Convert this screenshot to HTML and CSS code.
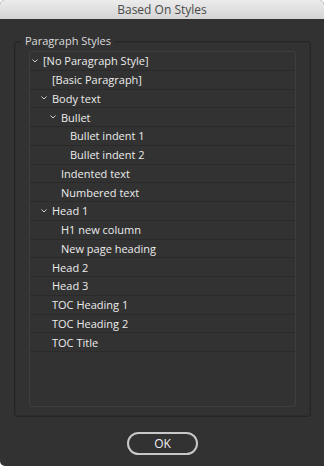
FILE: index.html
```html
<!DOCTYPE html>
<html lang="en">
<head>
    <meta charset="UTF-8">
    <title>Based On Styles</title>
    <link rel="stylesheet" href="styles.css">
</head>
<body>
    <div class="dialog">
        <div class="titlebar">Based On Styles</div>
        <div class="content">
            <div class="group">
                <span class="group-label">Paragraph Styles</span>
                <ul class="style-list">
                    <li class="row level-0"><svg class="chevron" viewBox="0 0 6 4"><polyline points="0.5,0.5 3,3 5.5,0.5"/></svg>[No Paragraph Style]</li>
                    <li class="row level-1 leaf">[Basic Paragraph]</li>
                    <li class="row level-1"><svg class="chevron" viewBox="0 0 6 4"><polyline points="0.5,0.5 3,3 5.5,0.5"/></svg>Body text</li>
                    <li class="row level-2"><svg class="chevron" viewBox="0 0 6 4"><polyline points="0.5,0.5 3,3 5.5,0.5"/></svg>Bullet</li>
                    <li class="row level-3 leaf">Bullet indent 1</li>
                    <li class="row level-3 leaf">Bullet indent 2</li>
                    <li class="row level-2 leaf">Indented text</li>
                    <li class="row level-2 leaf">Numbered text</li>
                    <li class="row level-1"><svg class="chevron" viewBox="0 0 6 4"><polyline points="0.5,0.5 3,3 5.5,0.5"/></svg>Head 1</li>
                    <li class="row level-2 leaf">H1 new column</li>
                    <li class="row level-2 leaf">New page heading</li>
                    <li class="row level-1 leaf">Head 2</li>
                    <li class="row level-1 leaf">Head 3</li>
                    <li class="row level-1 leaf">TOC Heading 1</li>
                    <li class="row level-1 leaf">TOC Heading 2</li>
                    <li class="row level-1 leaf">TOC Title</li>
                </ul>
            </div>
            <div class="actions">
                <button class="ok-button" type="button">OK</button>
            </div>
        </div>
    </div>
</body>
</html>
```

FILE: styles.css
```css
*, ::before, ::after {
    margin: 0;
    padding: 0;
    box-sizing: border-box;
}

body {
    background-color: #fff;
    font-family: "Open Sans", "Liberation Sans", sans-serif;
    font-size: 11px;
}

.dialog {
    width: 324px;
    height: 466px;
    background-color: #323232;
    border-radius: 5px 5px 0 5px;
    overflow: hidden;
    display: flex;
    flex-direction: column;
}

.titlebar {
    height: 19px;
    background: linear-gradient(#ececec, #d4d4d4);
    color: #4a4a4a;
    font-size: 12px;
    line-height: 19px;
    text-align: center;
}

.content {
    padding: 22px 13px 0 14px;
}

.group {
    position: relative;
    height: 376px;
    border: 1px solid #252525;
    border-radius: 3px;
    box-shadow: inset 0 0 0 1px #2d2d2d;
    padding: 9px 14px;
}

.group-label {
    position: absolute;
    top: -8px;
    left: 6px;
    padding: 0 4px;
    background-color: #323232;
    color: #dcdcdc;
    line-height: 14px;
}

.style-list {
    list-style: none;
    height: 356px;
    border: 1px solid #3e3e3e;
    border-radius: 3px;
    overflow: hidden;
}

.row {
    display: flex;
    align-items: center;
    height: 18.75px;
    border-bottom: 1px solid #2a2a2a;
    color: #ececec;
    white-space: nowrap;
}

.chevron {
    width: 6px;
    height: 4px;
    margin-right: 5px;
    fill: none;
    stroke: #d0d0d0;
    stroke-width: 1;
}

.level-0 { padding-left: 2px; }
.level-1 { padding-left: 11px; }
.level-2 { padding-left: 20px; }
.level-3 { padding-left: 29px; }
.leaf.level-1 { padding-left: 22px; }
.leaf.level-2 { padding-left: 31px; }
.leaf.level-3 { padding-left: 40px; }

.actions {
    display: flex;
    justify-content: center;
    padding-top: 15px;
}

.ok-button {
    width: 71px;
    height: 23px;
    border: 2px solid #c8c8c8;
    border-radius: 12px;
    background-color: #323232;
    color: #f0f0f0;
    font-family: "Open Sans", "Liberation Sans", sans-serif;
    font-size: 12px;
}
```
